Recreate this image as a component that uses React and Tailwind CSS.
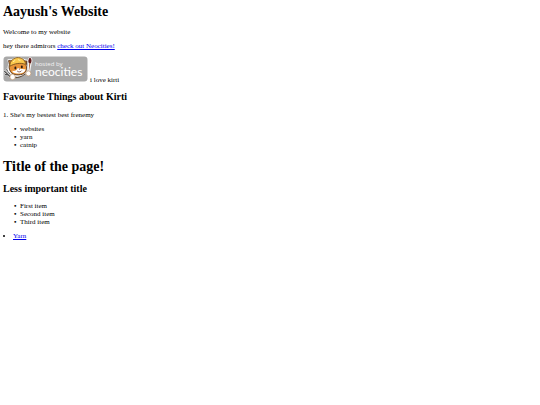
function NeocitiesBadge() {
  return (
    <svg
      viewBox="0 0 85 26"
      role="img"
      aria-label="hosted by neocities"
      className="w-[85px] h-[26px] shrink-0"
    >
      <rect x="0.5" y="0.5" width="84" height="25" rx="3.2" fill="#a9a9a9" />

      {/* fork */}
      <path d="M1.6 15.4 L5.4 19 M3.8 13.6 L6.8 17.4 M2.4 18.6 L5.4 19 L8.6 22" fill="none" stroke="#e8e8e8" strokeWidth="2.2" strokeLinecap="round" />
      <path d="M1.6 15.4 L5.4 19 M3.8 13.6 L6.8 17.4 M2.4 18.6 L5.4 19 L8.6 22" fill="none" stroke="#4a4a4a" strokeWidth="1.2" strokeLinecap="round" />

      {/* brush */}
      <path d="M27 1.4 C29 2.6 29 5.4 28 7.4 L26.6 15.4 L25.2 15 L25.6 7 C25 5 25.2 2.6 27 1.4Z" fill="#a5623c" stroke="#f4f4f4" strokeWidth="1.2" />
      <path d="M27 1.6 C28.8 2.8 28.8 5.4 27.9 7.2 L25.6 6.8 C25 4.8 25.6 2.8 27 1.6Z" fill="#5e1818" />

      {/* cat */}
      <path d="M6 8 L5.2 4 L9 4 C12 1 18 .8 21.4 4 L24 4.4 L23.4 9 C25 13 23.6 17.8 19.4 19 C14.6 21 8.6 19.6 6.8 16.2 C4.8 15 5.2 10.6 6 8Z" fill="#fff" stroke="#fff" strokeWidth="1.4" strokeLinejoin="round" />
      <path d="M6.4 8.4 L5.6 4.6 L9.6 5 L21 5 L23.8 5 L23.2 9.4 C24.4 13 23 17 19.4 18.2 C14.6 19.8 8.8 18.6 7.4 15.4 C5.8 13 6 10.4 6.4 8.4Z" fill="#e99438" stroke="#4c2c16" strokeWidth="0.9" />
      <path d="M6.8 10.2 C6.6 4.8 11 1.2 15.6 1.6 C20.2 2 22.8 5.4 22.4 8.4 C18 6.4 11.6 7.4 6.8 10.2Z" fill="#fbc94e" stroke="#79521e" strokeWidth="0.9" />
      <path d="M10 5.8 L12.2 4.4 M15 3.6 L17.4 4.6" stroke="#fff3a8" strokeWidth="0.9" />
      <path d="M14.8 12 C16.2 13 20.8 12.8 22.6 13.6 C22 16.4 19 17.8 15.2 17.6 C11.8 17.4 9.2 16.6 9.4 14.8 C11.8 15.2 14 14.2 14.8 12Z" fill="#fff" />
      <ellipse cx="12.4" cy="12" rx="1" ry="1.4" fill="#2b1c14" />
      <ellipse cx="18.8" cy="11" rx="1" ry="1.4" fill="#2b1c14" />
      <path d="M15.6 12.9 L17.4 12.6 L16.6 13.8Z" fill="#7a2b22" />
      <path d="M14.2 15 C15.6 16.4 17.8 16 18.6 14.6" fill="none" stroke="#68352a" strokeWidth="0.8" />

      {/* paws */}
      <path d="M11.4 21.6 C15 22 19 20.6 22.4 17.8" fill="none" stroke="#5c4632" strokeWidth="1" />
      <circle cx="9.6" cy="21" r="2.7" fill="#fff" stroke="#b98a5c" strokeWidth="0.6" />
      <circle cx="25.4" cy="17.4" r="2.5" fill="#fff" stroke="#b98a5c" strokeWidth="0.6" />

      <text x="32" y="10" fontSize="6" fill="#f2f2f2" className="font-['Open_Sans',sans-serif]">
        hosted by
      </text>
      <text x="32" y="20" fontSize="12" fill="#fff" className="font-[Lato,sans-serif]">
        neocities
      </text>
    </svg>
  );
}

export default function App() {
  return (
    <main className="px-[3px] py-1 bg-white text-black font-['Liberation_Serif',serif] text-[7px] leading-[8px]">
      <h1 className="text-[14px] leading-[16px] font-bold">Aayush's Website</h1>
      <p className="mt-2">Welcome to my website</p>
      <p className="mt-1.5">
        hey there admirors{" "}
        <a href="#neocities" className="text-[#0000ee] underline">
          check out Neocities!
        </a>
      </p>

      <div className="mt-1.5 flex items-baseline gap-0.5">
        <a href="#neocities">
          <NeocitiesBadge />
        </a>
        <span>i love kirti</span>
      </div>

      <h2 className="mt-[7px] text-[10px] leading-[12px] font-bold">Favourite Things about Kirti</h2>
      <p className="mt-2">1. She's my bestest best frenemy</p>
      <ul className="mt-1.5 pl-[17px] list-['•__'] marker:font-bold">
        <li>websites</li>
        <li>yarn</li>
        <li>catnip</li>
      </ul>

      <h1 className="mt-2.5 text-[14px] leading-[16px] font-bold">Title of the page!</h1>
      <h2 className="mt-2 text-[10px] leading-[12px] font-bold">Less important title</h2>
      <ul className="mt-[7px] pl-[17px] list-['•__'] marker:font-bold">
        <li>First item</li>
        <li>Second item</li>
        <li>Third item</li>
      </ul>

      <ul className="mt-1.5 list-disc list-inside">
        <li>
          <a href="#yarn" className="text-[#0000ee] underline">
            Yarn
          </a>
        </li>
      </ul>
    </main>
  );
}
